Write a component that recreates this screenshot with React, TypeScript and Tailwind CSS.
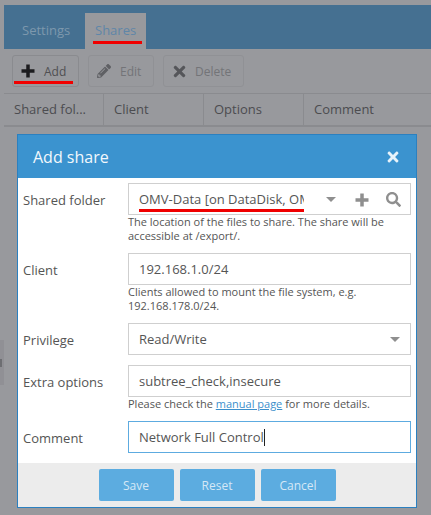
import { FaPencilAlt, FaSearch, FaTimes } from "react-icons/fa";

const PlusIcon = ({ className }: { className: string }) => (
  <svg viewBox="0 0 14 14" className={className} fill="currentColor">
    <path d="M5.250 0.500h3.500v4.750h4.750v3.500h-4.750v4.750h-3.500v-4.750h-4.750v-3.500h4.750z" />
  </svg>
);

const Caret = () => (
  <span className="block h-0 w-0 shrink-0 border-x-[5px] border-t-[5px] border-x-transparent border-t-[#8f8f8f]" />
);

const Field = ({ label, children, hint }: { label: string; children: React.ReactNode; hint?: React.ReactNode }) => (
  <div className="flex">
    <div className="w-[105px] shrink-0 pt-[8px] text-[13px] leading-[18px] text-[#555]">{label}</div>
    <div className="w-[283px]">
      {children}
      {hint && <div className="pb-[1px] text-[11px] leading-[14px] text-[#555]">{hint}</div>}
    </div>
  </div>
);

const Box = ({ children, focused }: { children: React.ReactNode; focused?: boolean }) => (
  <div className={`relative flex h-[32px] items-center border-[1px] bg-white pl-[10px] pt-[1px] text-[13px] text-[#555] ${focused ? "border-[#5dabe0]" : "border-[#cfcfcf]"}`}>
    {children}
  </div>
);

const ColHead = ({ label }: { label: string }) => (
  <div className="flex w-[100px] items-center border-r border-[#8a8b8f] pl-[10px] pt-[1px]">{label}</div>
);

export default function App() {
  return (
    <div className="relative h-[515px] w-[431px] overflow-hidden bg-[#98999d] font-['Open_Sans',sans-serif]">
      {/* page behind the overlay */}
      <div className="pl-[4px] pt-[5px]">
        <div className="flex h-[44px] items-end bg-[#457091] pl-[7px] text-[13px]">
          <div className="flex h-[36px] w-[74px] items-center pl-[11px] text-[#7d98ad]">Settings</div>
          <div className="relative flex h-[36px] w-[61px] items-center bg-[#98999d] pl-[10px] text-[#5f86a8]">
            Shares
            <div className="absolute bottom-[5px] left-[8px] h-[3px] w-[49px] bg-[#f00000]" />
          </div>
        </div>
        <div className="flex h-[44px] items-center gap-[9px] pl-[8px] text-[12px]">
          <div className="relative flex h-[32px] w-[67px] items-center rounded-[3px] border border-[#8a8b8f] pl-[8px] text-[#4f4f52]">
            <PlusIcon className="h-[14px] w-[14px] text-[#1c1c1f]" />
            <span className="pl-[9px] pt-[1px]">Add</span>
            <div className="absolute bottom-[2px] left-[1px] h-[3px] w-[59px] bg-[#f00000]" />
          </div>
          <div className="flex h-[32px] w-[66px] items-center rounded-[3px] border border-[#909195] pl-[8px] text-[#737478]">
            <FaPencilAlt size={14} className="text-[#5f6064]" />
            <span className="pl-[9px] pt-[1px]">Edit</span>
          </div>
          <div className="flex h-[32px] w-[81px] items-center rounded-[3px] border border-[#909195] pl-[7px] text-[#737478]">
            <FaTimes size={17} className="text-[#55565a]" />
            <span className="pl-[7px] pt-[1px]">Delete</span>
          </div>
        </div>
        <div className="flex h-[34px] border-y border-b-[2px] border-[#8a8b8f] text-[13px] text-[#4c4c50]">
          <ColHead label="Shared fol..." />
          <ColHead label="Client" />
          <ColHead label="Options" />
          <div className="flex items-center pl-[10px] pt-[1px]">Comment</div>
        </div>
      </div>

      {/* collapsed side panel handle */}
      <div className="absolute left-0 top-[340px] flex h-[45px] w-[4px] items-center bg-[#909095]">
        <span className="h-[8px] w-[2px] bg-[#6d6e72]" />
      </div>

      {/* dialog */}
      <div className="relative top-[7px] ml-[17px] w-[400px] border border-[#2b80c0] bg-white">
        <div className="flex h-[43px] items-center justify-between bg-[#3b93cf] pl-[15px] pr-[15px] text-[16px] text-[#f2f8fc]">
          Add share
          <FaTimes size={16} className="text-[#e8f3fa]" />
        </div>
        <div className="flex flex-col pl-[5px] pt-[5px]">
          <Field label="Shared folder" hint={<>The location of the files to share. The share will be<br />accessible at /export/.</>}>
            <Box>
              <div className="w-[165px] shrink-0 overflow-hidden whitespace-nowrap">OMV-Data [on DataDisk, OMV]</div>
              <span className="pl-[22px]"><Caret /></span>
              <PlusIcon className="ml-[19px] h-[14px] w-[14px] text-[#8f8f8f]" />
              <FaSearch size={15} className="ml-[17px] text-[#8f8f8f]" />
              <div className="absolute bottom-[2px] left-[10px] h-[3px] w-[165px] bg-[#f00000]" />
            </Box>
          </Field>
          <div className="h-[9px]" />
          <Field label="Client" hint={<>Clients allowed to mount the file system, e.g.<br />192.168.178.0/24.</>}>
            <Box>192.168.1.0/24</Box>
          </Field>
          <div className="h-[9px]" />
          <Field label="Privilege">
            <Box>
              <span className="w-[251px]">Read/Write</span>
              <Caret />
            </Box>
          </Field>
          <div className="h-[10px]" />
          <Field label="Extra options" hint={<>Please check the <span className="text-[#3b8fcc] underline">manual page</span> for more details.</>}>
            <Box>subtree_check,insecure</Box>
          </Field>
          <div className="h-[9px]" />
          <Field label="Comment">
            <Box focused>
              Network Full Control
              <span className="h-[17px] w-px bg-[#222]" />
            </Box>
          </Field>
        </div>
        <div className="mt-[10px] flex h-[44px] items-center justify-center gap-[6px] bg-[#ececec] text-[12px] text-[#d5e8f6]">
          <div className="flex h-[32px] w-[75px] items-center justify-center rounded-[2px] bg-[#5cace0] pt-[1px]">Save</div>
          <div className="flex h-[32px] w-[75px] items-center justify-center rounded-[2px] bg-[#5cace0] pt-[1px]">Reset</div>
          <div className="flex h-[32px] w-[75px] items-center justify-center rounded-[2px] bg-[#5cace0] pt-[1px]">Cancel</div>
        </div>
      </div>
    </div>
  );
}
